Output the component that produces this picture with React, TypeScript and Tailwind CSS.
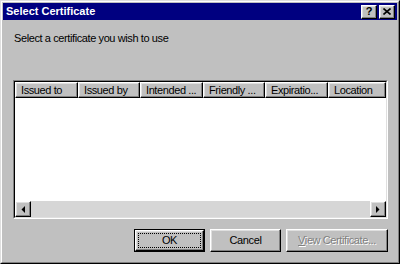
import React from 'react';

const raised =
  'border border-t-white border-l-white border-r-black border-b-black shadow-[inset_-1px_-1px_0_#808080,inset_1px_1px_0_#dfdfdf] bg-[#c0c0c0]';

const columns = [
  { label: 'Issued to', w: 'w-[63px]' },
  { label: 'Issued by', w: 'w-[62px]' },
  { label: 'Intended ...', w: 'w-[63px]' },
  { label: 'Friendly ...', w: 'w-[62px]' },
  { label: 'Expiratio...', w: 'w-[63px]' },
  { label: 'Location', w: 'flex-1' },
];

function Arrow({ dir }: { dir: 'left' | 'right' }) {
  return (
    <svg width="4" height="7" viewBox="0 0 4 7">
      {dir === 'left' ? <path d="M4 0V7L0.5 3.5Z" fill="#000" /> : <path d="M0 0V7L3.5 3.5Z" fill="#000" />}
    </svg>
  );
}

export default function App() {
  return (
    <div className="w-[400px] h-[264px] bg-[#c0c0c0] font-['Liberation_Sans',Arial,sans-serif] text-[11px] text-black">
      <div className="h-full border border-t-[#dfdfdf] border-l-[#dfdfdf] border-r-black border-b-black">
        <div className="h-full border border-t-white border-l-white border-r-[#808080] border-b-[#808080] p-px flex flex-col">
          {/* title bar */}
          <div className="h-[17px] bg-[#000080] flex items-center pl-[3px] pr-[2px]">
            <span className="flex-1 text-white font-bold leading-none">Select Certificate</span>
            <div className="flex gap-[2px]">
              <div className={`${raised} w-[16px] h-[14px] flex items-center justify-center font-bold text-[11px] leading-none`}>?</div>
              <div className={`${raised} w-[16px] h-[14px] flex items-center justify-center`}>
                <svg width="8" height="7" viewBox="0 0 8 7">
                  <path d="M0.5 0.5L7.5 6.5M7.5 0.5L0.5 6.5" stroke="#000" strokeWidth="1.6" />
                </svg>
              </div>
            </div>
          </div>

          {/* body */}
          <div className="flex-1 flex flex-col pt-[12px] pl-[10px] pr-[9px] tracking-[-0.4px]">
            <p className="leading-[13px] pl-px">Select a certificate you wish to use</p>

            <div className="mt-[35px] h-[139px] border border-t-[#808080] border-l-[#808080] border-r-white border-b-white">
              <div className="h-full border border-t-black border-l-black border-r-[#dfdfdf] border-b-[#dfdfdf] bg-white flex flex-col">
                <div className="h-[16px] flex">
                  {columns.map((c) => (
                    <div
                      key={c.label}
                      className={`${c.w} ${raised} flex items-center pl-[5px] leading-none whitespace-nowrap overflow-hidden`}
                    >
                      {c.label}
                    </div>
                  ))}
                </div>
                <div className="flex-1" />
                <div className="h-[16px] flex">
                  <div className={`${raised} w-[16px] flex items-center justify-center`}>
                    <Arrow dir="left" />
                  </div>
                  <div className="flex-1 bg-[#d6d6d6]" />
                  <div className={`${raised} w-[16px] flex items-center justify-center`}>
                    <Arrow dir="right" />
                  </div>
                </div>
              </div>
            </div>

            {/* buttons */}
            <div className="mt-[10px] flex justify-end gap-[5px]">
              <div className="w-[71px] h-[23px] border border-black">
                <div className={`${raised} h-full p-[2px]`}>
                  <div className="h-full border border-dotted border-black flex items-center justify-center leading-none">
                    OK
                  </div>
                </div>
              </div>
              <div className={`${raised} w-[71px] h-[23px] flex items-center justify-center leading-none`}>Cancel</div>
              <div
                className={`${raised} w-[102px] h-[23px] flex items-center justify-center leading-none text-[#808080] [text-shadow:1px_1px_0_#fff]`}
              >
                <span>
                  <span className="underline">V</span>iew Certificate...
                </span>
              </div>
            </div>
          </div>
        </div>
      </div>
    </div>
  );
}
